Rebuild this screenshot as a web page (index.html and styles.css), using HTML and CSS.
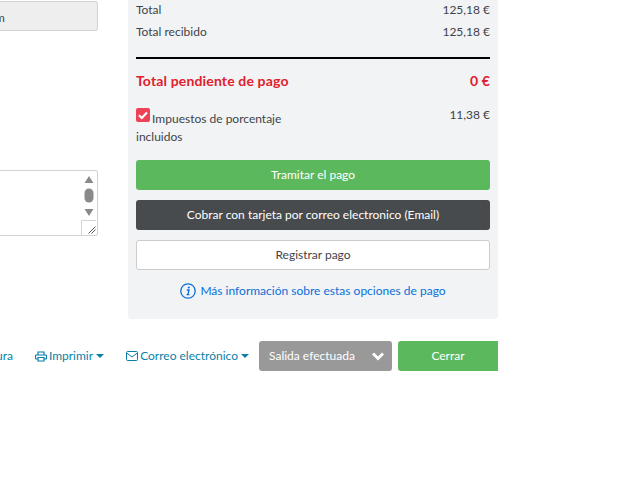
FILE: index.html
```html
<!DOCTYPE html>
<html lang="es">
<head>
<meta charset="utf-8">
<title>Pago</title>
<link rel="stylesheet" href="styles.css">
</head>
<body>
<div class="page">
  <div class="top">
    <div class="left">
      <div class="field">m</div>
      <div class="notes">
        <svg class="scroll" width="17" height="66" viewBox="0 0 17 66">
          <path d="M3.500 13 L8 6 L12.500 13Z M3.500 39 L12.500 39 L8 46Z" fill="#8a8a8a"/>
          <rect x="3.500" y="18.500" width="9" height="14" rx="4.500" fill="#8a8a8a"/>
          <path d="M0.500 65 V50.500 H15" fill="none" stroke="#d4d4d4"/>
          <path d="M7.500 63.500 L14.500 56.500 M10.500 63.500 L14.500 59.500" stroke="#555" stroke-width="1" fill="none"/>
        </svg>
      </div>
    </div>
    <div class="panel">
      <div class="row first"><span>Total</span><span>125,18 €</span></div>
      <div class="row"><span>Total recibido</span><span>125,18 €</span></div>
      <div class="rule"></div>
      <div class="row due"><span>Total pendiente de pago</span><span>0 €</span></div>
      <div class="row tax">
        <div class="tax-label">
          <svg class="check" width="14" height="14" viewBox="0 0 14 14">
            <rect width="14" height="14" rx="2" fill="#ed4256"/>
            <path d="M3 7.200 L5.800 10 L11 4.500" fill="none" stroke="#fff" stroke-width="2.200"/>
          </svg>
          Impuestos de porcentaje incluidos
        </div>
        <span class="tax-value">11,38 €</span>
      </div>
      <div class="btn green">Tramitar el pago</div>
      <div class="btn dark">Cobrar con tarjeta por correo electronico (Email)</div>
      <div class="btn plain">Registrar pago</div>
      <div class="info">
        <svg width="16" height="16" viewBox="0 0 16 16">
          <circle cx="8" cy="8" r="7.200" fill="none" stroke="#0a6fd8" stroke-width="1.300"/>
          <circle cx="8.800" cy="4.500" r="1.100" fill="#0a6fd8"/>
          <path d="M6.800 7 H9 L7.900 11.600 H9.400 M6.600 11.600 H8" fill="none" stroke="#0a6fd8" stroke-width="1.300"/>
        </svg>
        <span>Más información sobre estas opciones de pago</span>
      </div>
    </div>
  </div>
  <div class="footer">
    <span class="link cut">Ver factura</span>
    <span class="link">
      <svg width="12" height="11" viewBox="0 0 12 11">
        <path d="M3 4V1H9V4M3 8H1.500A1 1 0 0 1 .5 7V5A1 1 0 0 1 1.500 4H10.500A1 1 0 0 1 11.500 5V7A1 1 0 0 1 10.500 8H9M3 6.500H9V10H3Z" fill="none" stroke="#0a7fa8" stroke-width="1.200"/>
      </svg>
      Imprimir<i class="caret"></i>
    </span>
    <span class="link">
      <svg width="12" height="10" viewBox="0 0 12 10">
        <rect x=".5" y=".5" width="11" height="9" rx="1" fill="none" stroke="#0a7fa8"/>
        <path d="M.8 2 L6 6 L11.200 2" fill="none" stroke="#0a7fa8"/>
      </svg>
      Correo electrónico<i class="caret"></i>
    </span>
    <div class="status">
      <span>Salida efectuada</span>
      <svg width="14" height="10" viewBox="0 0 14 10">
        <path d="M2 2.500 L7 7.500 L12 2.500" fill="none" stroke="#fff" stroke-width="2.800"/>
      </svg>
    </div>
    <div class="close">Cerrar</div>
  </div>
</div>
</body>
</html>
```

FILE: styles.css
```css
* {
  box-sizing: border-box;
}

html,
body {
  margin: 0;
  background: #fff;
}

body {
  font-family: Lato, "Liberation Sans", sans-serif;
  font-size: 12px;
  line-height: 18px;
  color: #3f4448;
}

.page {
  width: 498px;
  height: 484px;
  overflow: hidden;
}

.top {
  display: flex;
  gap: 30px;
  height: 319px;
}

.left {
  width: 98px;
  flex: none;
  padding-top: 1px;
}

.field {
  height: 30px;
  padding: 6px 0 0;
  line-height: 20px;
  text-indent: -5px;
  overflow: hidden;
  background: #eeeeee;
  border: 1px solid #d2d2d2;
  border-left: 0;
  border-radius: 0 3px 3px 0;
}

.notes {
  display: flex;
  justify-content: flex-end;
  height: 66px;
  margin-top: 139px;
  background: #fff;
  border: 1px solid #d2d2d2;
  border-left: 0;
  border-radius: 0 3px 3px 0;
  overflow: hidden;
}

.scroll {
  flex: none;
  margin: -1px -1px 0 0;
}

.panel {
  flex: 1;
  display: flex;
  flex-direction: column;
  padding: 0 8px;
  background: #f1f3f5;
  border-radius: 0 0 4px 4px;
}

.row {
  display: flex;
  justify-content: space-between;
}

.first {
  margin-top: 1px;
  margin-bottom: 4px;
}

.rule {
  height: 2px;
  margin-top: 16px;
  background: #000;
}

.due {
  margin-top: 13px;
  font-size: 14px;
  font-weight: 700;
  letter-spacing: 0.15px;
  color: #e0202c;
}

.tax {
  margin-top: 18px;
  align-items: flex-start;
}

.tax-label {
  width: 170px;
}

.tax-value {
  margin-top: -2px;
}

.check {
  vertical-align: 1px;
  margin-right: -1px;
}

.btn {
  height: 30px;
  margin-bottom: 10px;
  text-align: center;
  line-height: 30px;
  border-radius: 3px;
}

.green {
  margin-top: 14px;
  background: #5cb85c;
  color: #fff;
}

.dark {
  background: #484b4d;
  color: #fff;
}

.plain {
  background: #fff;
  border: 1px solid #cccccc;
  line-height: 28px;
}

.info {
  display: flex;
  justify-content: center;
  align-items: center;
  gap: 4px;
  margin-top: 2px;
  color: #0a6fd8;
}

.footer {
  display: flex;
  justify-content: flex-end;
  align-items: center;
  height: 30px;
  margin-top: 22px;
  white-space: nowrap;
}

.link {
  flex: none;
  display: flex;
  align-items: center;
  gap: 2px;
  margin-right: 22px;
  color: #0a7fa8;
}

.link:nth-child(3) {
  margin-right: 10px;
}

.caret {
  width: 0;
  height: 0;
  margin-left: 1px;
  border-top: 4px solid #0a7fa8;
  border-left: 4px solid transparent;
  border-right: 4px solid transparent;
}

.status {
  flex: none;
  display: flex;
  align-items: center;
  justify-content: space-between;
  width: 133px;
  height: 30px;
  padding: 0 7px 0 10px;
  margin-right: 6px;
  background: #999999;
  color: #fff;
  border-radius: 3px;
}

.close {
  flex: none;
  width: 100px;
  height: 30px;
  line-height: 30px;
  text-align: center;
  background: #5cb85c;
  color: #fff;
  border-radius: 3px 0 0 3px;
}
```
